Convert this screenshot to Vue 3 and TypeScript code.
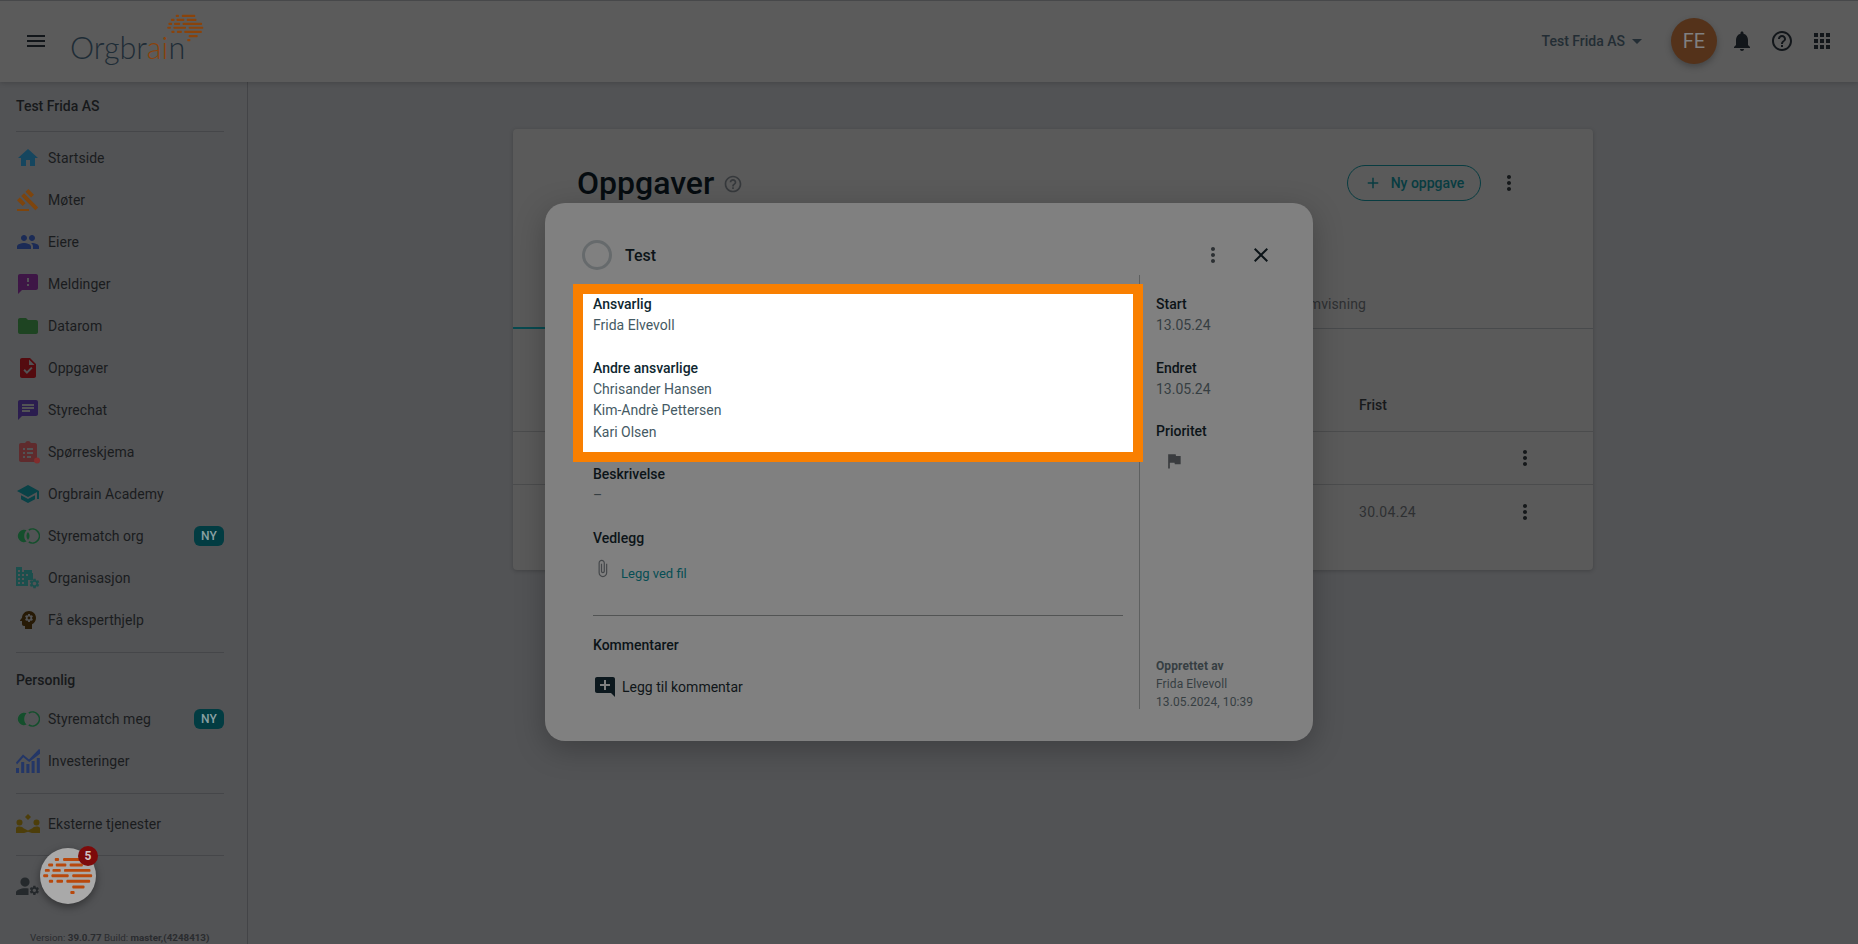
<template>
  <div class="page">
    <header class="topbar">
      <button class="icon-btn menu-btn" type="button">
        <svg viewBox="0 0 24 24" width="24" height="24"><path :d="icons.menu" /></svg>
      </button>
      <div class="logo">
        <span class="logo-text">Orgbr<span class="logo-accent">ai</span>n</span>
        <svg class="logo-brain" viewBox="130 650 150 115">
          <rect v-for="(r, i) in brainRects" :key="i" :x="r[0]" :y="r[1]" :width="r[2]" height="9" rx="3" />
        </svg>
      </div>
      <div class="topbar-right">
        <span class="org-name">Test Frida AS</span>
        <span class="caret"></span>
        <span class="avatar">FE</span>
        <svg class="top-icon" viewBox="0 0 24 24" width="24" height="24"><path :d="icons.bell" /></svg>
        <svg class="top-icon" viewBox="0 0 24 24" width="24" height="24"><path :d="icons.help" /></svg>
        <svg class="top-icon" viewBox="0 0 24 24" width="24" height="24"><path :d="icons.apps" /></svg>
      </div>
    </header>

    <div class="content">
      <aside class="sidebar">
        <div class="side-title">Test Frida AS</div>
        <div class="side-line first-line"></div>
        <nav>
          <div v-for="item in mainNav" :key="item.label" class="nav-item">
            <svg viewBox="0 0 24 24" width="24" height="24">
              <path
                v-for="(s, i) in item.shapes"
                :key="i"
                :d="s.d"
                :fill="s.fill"
                :transform="s.tf"
                :stroke="s.stroke"
              />
            </svg>
            <span class="nav-label">{{ item.label }}</span>
            <span v-if="item.isNew" class="ny">NY</span>
          </div>
        </nav>
        <div class="side-line after-main"></div>
        <div class="side-title personal">Personlig</div>
        <nav class="personal-nav">
          <div v-for="item in personalNav" :key="item.label" class="nav-item">
            <svg viewBox="0 0 24 24" width="24" height="24">
              <path v-for="(s, i) in item.shapes" :key="i" :d="s.d" :fill="s.fill" :stroke="s.stroke" />
            </svg>
            <span class="nav-label">{{ item.label }}</span>
            <span v-if="item.isNew" class="ny">NY</span>
          </div>
        </nav>
        <div class="side-line after-main"></div>
        <div class="nav-item external">
          <svg viewBox="0 0 24 24" width="24" height="24">
            <path v-for="(s, i) in externalShapes" :key="i" :d="s.d" :fill="s.fill" transform="translate(0 2)" />
          </svg>
          <span class="nav-label">Eksterne tjenester</span>
        </div>
        <div class="side-line after-external"></div>
        <svg class="user-settings" viewBox="0 0 24 24" width="24" height="24">
          <path v-for="(s, i) in userShapes" :key="i" :d="s.d" :fill="s.fill" :transform="s.tf" />
        </svg>
        <div class="version">Version: <b>39.0.77</b> Build: <b>master,(4248413)</b></div>
      </aside>

      <main class="main">
        <section class="card">
          <div class="card-head">
            <h1 class="card-title">Oppgaver</h1>
            <svg class="title-help" viewBox="0 0 24 24" width="20" height="20"><path :d="icons.help" /></svg>
            <button class="new-btn" type="button">
              <svg viewBox="0 0 24 24" width="18" height="18"><path :d="icons.add" /></svg>
              Ny oppgave
            </button>
            <svg class="card-more" viewBox="0 0 24 24" width="24" height="24"><path :d="icons.more" /></svg>
          </div>
          <div class="tabs">
            <div class="tab-active"></div>
            <span class="tab">Teamvisning</span>
          </div>
          <div class="table-head"><span class="col-date">Frist</span></div>
          <div class="table-row">
            <span class="col-date"></span>
            <svg viewBox="0 0 24 24" width="24" height="24"><path :d="icons.more" /></svg>
          </div>
          <div class="table-row">
            <span class="col-date">30.04.24</span>
            <svg viewBox="0 0 24 24" width="24" height="24"><path :d="icons.more" /></svg>
          </div>
        </section>
      </main>
    </div>

    <div class="fab">
      <svg viewBox="130 650 150 115" width="50" height="38">
        <rect v-for="(r, i) in brainRects" :key="i" :x="r[0]" :y="r[1]" :width="r[2]" height="9" rx="3" />
      </svg>
      <span class="fab-badge">5</span>
    </div>

    <div class="overlay">
      <div class="dialog">
        <div class="dialog-head">
          <span class="task-ring"></span>
          <span class="task-name">Test</span>
          <svg class="dialog-more" viewBox="0 0 24 24" width="24" height="24"><path :d="icons.more" /></svg>
          <svg class="dialog-close" viewBox="0 0 24 24" width="24" height="24"><path :d="icons.close" /></svg>
        </div>
        <div class="dialog-body">
          <div class="col-left">
            <div class="spotlight">
              <div class="label">Ansvarlig</div>
              <div class="value">Frida Elvevoll</div>
              <div class="label second">Andre ansvarlige</div>
              <div class="value">Chrisander Hansen</div>
              <div class="value">Kim-Andrè Pettersen</div>
              <div class="value last">Kari Olsen</div>
            </div>
            <div class="label desc-label">Beskrivelse</div>
            <div class="value">–</div>
            <div class="label second">Vedlegg</div>
            <div class="attach">
              <svg viewBox="0 0 24 24" width="19" height="19"><path :d="icons.clip" /></svg>
              <a class="attach-link">Legg ved fil</a>
            </div>
            <div class="divider"></div>
            <div class="label">Kommentarer</div>
            <div class="add-comment">
              <svg viewBox="0 0 24 24" width="24" height="24"><path :d="icons.comment" /></svg>
              <span>Legg til kommentar</span>
            </div>
          </div>
          <div class="col-right">
            <div class="label">Start</div>
            <div class="value">13.05.24</div>
            <div class="label second">Endret</div>
            <div class="value">13.05.24</div>
            <div class="label second priority">Prioritet</div>
            <svg class="flag" viewBox="0 0 24 24" width="20" height="20"><path :d="icons.flag" /></svg>
            <div class="meta">
              <div class="meta-title">Opprettet av</div>
              <div>Frida Elvevoll</div>
              <div>13.05.2024, 10:39</div>
            </div>
          </div>
        </div>
      </div>
    </div>
  </div>
</template>

<script setup lang="ts">
interface Shape {
  d: string;
  fill: string;
  tf?: string;
  stroke?: string;
}

interface NavItem {
  label: string;
  shapes: Shape[];
  isNew?: boolean;
}

const navBg = '#525355';

const gear =
  'M19.14 12.94c.04-.3.06-.61.06-.94 0-.32-.02-.64-.07-.94l2.03-1.58c.18-.14.23-.41.12-.61l-1.92-3.32c-.12-.22-.37-.29-.59-.22l-2.39.96c-.5-.38-1.03-.7-1.62-.94l-.36-2.54c-.04-.24-.24-.41-.48-.41h-3.84c-.24 0-.43.17-.47.41l-.36 2.54c-.59.24-1.13.57-1.62.94l-2.39-.96c-.22-.08-.47 0-.59.22L2.74 8.87c-.12.21-.08.47.12.61l2.03 1.58c-.05.3-.09.63-.09.94s.02.64.07.94l-2.03 1.58c-.18.14-.23.41-.12.61l1.92 3.32c.12.22.37.29.59.22l2.39-.96c.5.38 1.03.7 1.62.94l.36 2.54c.05.24.24.41.48.41h3.84c.24 0 .44-.17.47-.41l.36-2.54c.59-.24 1.13-.56 1.62-.94l2.39.96c.22.08.47 0 .59-.22l1.92-3.32c.12-.22.07-.47-.12-.61l-2.01-1.58zM12 15.6c-1.98 0-3.6-1.62-3.6-3.6s1.62-3.6 3.6-3.6 3.6 1.62 3.6 3.6-1.62 3.6-3.6 3.6z';

const icons = {
  menu: 'M3 18h18v-2H3v2zm0-5h18v-2H3v2zm0-7v2h18V6H3z',
  bell: 'M12 22c1.1 0 2-.9 2-2h-4c0 1.1.9 2 2 2zm6-6v-5c0-3.07-1.63-5.64-4.5-6.32V4c0-.83-.67-1.5-1.5-1.5s-1.5.67-1.5 1.5v.68C7.64 5.36 6 7.92 6 11v5l-2 2v1h16v-1l-2-2z',
  help: 'M11 18h2v-2h-2v2zm1-16C6.48 2 2 6.48 2 12s4.48 10 10 10 10-4.48 10-10S17.52 2 12 2zm0 18c-4.41 0-8-3.59-8-8s3.59-8 8-8 8 3.59 8 8-3.59 8-8 8zm0-14c-2.21 0-4 1.79-4 4h2c0-1.1.9-2 2-2s2 .9 2 2c0 2-3 1.75-3 5h2c0-2.25 3-2.5 3-5 0-2.21-1.79-4-4-4z',
  apps: 'M4 8h4V4H4v4zm6 12h4v-4h-4v4zm-6 0h4v-4H4v4zm0-6h4v-4H4v4zm6 0h4v-4h-4v4zm6-10v4h4V4h-4zm-6 4h4V4h-4v4zm6 6h4v-4h-4v4zm0 6h4v-4h-4v4z',
  more: 'M12 8c1.1 0 2-.9 2-2s-.9-2-2-2-2 .9-2 2 .9 2 2 2zm0 2c-1.1 0-2 .9-2 2s.9 2 2 2 2-.9 2-2-.9-2-2-2zm0 6c-1.1 0-2 .9-2 2s.9 2 2 2 2-.9 2-2-.9-2-2-2z',
  close: 'M19 6.41L17.59 5 12 10.59 6.41 5 5 6.41 10.59 12 5 17.59 6.41 19 12 13.41 17.59 19 19 17.59 13.41 12z',
  add: 'M19 13h-6v6h-2v-6H5v-2h6V5h2v6h6v2z',
  flag: 'M14.4 6L14 4H5v17h2v-7h5.6l.4 2h7V6z',
  clip: 'M16.5 6v11.5c0 2.21-1.79 4-4 4s-4-1.79-4-4V5c0-1.38 1.12-2.5 2.5-2.5s2.5 1.12 2.5 2.5v10.5c0 .55-.45 1-1 1s-1-.45-1-1V6H10v9.5c0 1.38 1.12 2.5 2.5 2.5s2.5-1.12 2.5-2.5V5c0-2.21-1.79-4-4-4S7 2.79 7 5v12.5c0 3.04 2.46 5.5 5.5 5.5s5.5-2.46 5.5-5.5V6h-1.5z',
  comment: 'M22 4c0-1.1-.9-2-2-2H4c-1.1 0-2 .9-2 2v12c0 1.1.9 2 2 2h14l4 4V4zm-5 7h-4v4h-2v-4H7V9h4V5h2v4h4v2z',
};

// x, y, width of each dash in the brain mark
const brainRects: number[][] = [
  [165, 653, 13], [190, 653, 55],
  [145, 670, 15], [168, 670, 32], [210, 670, 40],
  [135, 686, 15], [158, 686, 25], [193, 686, 80],
  [130, 702, 15], [155, 702, 52], [218, 702, 60],
  [147, 719, 13], [170, 719, 20], [200, 719, 72],
  [218, 736, 37],
  [212, 753, 13],
];

const matchShapes = (left: string, lens: string, right: string): Shape[] => [
  { d: 'M12 6.26A7 7 0 1 0 12 17.74 7 7 0 0 1 12 6.26z', fill: left, stroke: navBg },
  { d: 'M12 8A6 6 0 0 1 12 16 6 6 0 0 1 12 8z', fill: lens },
  { d: 'M12.8 6A7 7 0 1 1 12.8 18', fill: 'none', stroke: right },
];

const mainNav: NavItem[] = [
  { label: 'Startside', shapes: [{ d: 'M10 20v-6h4v6h5v-8h3L12 3 2 12h3v8z', fill: '#15465f' }] },
  {
    label: 'Møter',
    shapes: [{
      d: 'M1 21h12v2H1v-2zM5.245 8.07l2.83-2.827 14.14 14.142-2.828 2.828L5.245 8.07zM12.317 1l5.657 5.656-2.83 2.83-5.654-5.66L12.317 1zM3.825 9.485l5.657 5.657-2.828 2.828-5.657-5.657 2.828-2.828z',
      fill: '#7e450d',
    }],
  },
  {
    label: 'Eiere',
    shapes: [{
      d: 'M16 11c1.66 0 2.99-1.34 2.99-3S17.66 5 16 5c-1.66 0-3 1.34-3 3s1.34 3 3 3zm-8 0c1.66 0 2.99-1.34 2.99-3S9.66 5 8 5C6.34 5 5 6.34 5 8s1.34 3 3 3zm0 2c-2.33 0-7 1.17-7 3.5V19h14v-2.5c0-2.33-4.67-3.5-7-3.5zm8 0c-.29 0-.62.02-.97.05 1.16.84 1.97 1.97 1.97 3.45V19h6v-2.5c0-2.33-4.67-3.5-7-3.5z',
      fill: '#1b2b56',
    }],
  },
  {
    label: 'Meldinger',
    shapes: [{
      d: 'M20 2H4c-1.1 0-1.99.9-1.99 2L2 22l4-4h14c1.1 0 2-.9 2-2V4c0-1.1-.9-2-2-2zm-7 12h-2v-2h2v2zm0-4h-2V6h2v4z',
      fill: '#3e1646',
    }],
  },
  {
    label: 'Datarom',
    shapes: [{
      d: 'M10 4H4c-1.1 0-1.99.9-1.99 2L2 18c0 1.1.9 2 2 2h16c1.1 0 2-.9 2-2V8c0-1.1-.9-2-2-2h-8l-2-2z',
      fill: '#1e4422',
    }],
  },
  {
    label: 'Oppgaver',
    shapes: [{
      d: 'M14 2H6c-1.1 0-1.99.9-1.99 2L4 20c0 1.1.89 2 1.99 2H18c1.1 0 2-.9 2-2V8l-6-6zm-3.06 16L7.4 14.46l1.41-1.41 2.12 2.12 4.24-4.24 1.41 1.41L10.94 18zM13 9V3.5L18.5 9H13z',
      fill: '#540b0f',
    }],
  },
  {
    label: 'Styrechat',
    shapes: [{
      d: 'M20 2H4c-1.1 0-1.99.9-1.99 2L2 22l4-4h14c1.1 0 2-.9 2-2V4c0-1.1-.9-2-2-2zM6 9h12v2H6V9zm8 5H6v-2h8v2zm4-6H6V6h12v2z',
      fill: '#2b1d4f',
    }],
  },
  {
    label: 'Spørreskjema',
    shapes: [
      {
        d: 'M19 3h-4.18C14.4 1.84 13.3 1 12 1c-1.3 0-2.4.84-2.82 2H5c-1.1 0-2 .9-2 2v15c0 1.1.9 2 2 2h14c1.1 0 2-.9 2-2V5c0-1.1-.9-2-2-2z',
        fill: '#5f2b2d',
      },
      { d: 'M7 8h2v2H7zM11 8h6v2h-6zM7 12h2v2H7zM11 12h6v2h-6zM7 16h2v2H7zM11 16h4v2h-4z', fill: navBg },
      { d: 'M21 17.5a3 3 0 1 0 0 6 3 3 0 0 0 0-6z', fill: '#812d2d' },
    ],
  },
  {
    label: 'Orgbrain Academy',
    shapes: [{
      d: 'M5 13.18v4L12 21l7-3.82v-4L12 17l-7-3.82zM12 3L1 9l11 6 9-4.91V17h2V9L12 3z',
      fill: '#094247',
    }],
  },
  { label: 'Styrematch org', isNew: true, shapes: matchShapes('#144f2c', '#144f2c', '#144f2c') },
  {
    label: 'Organisasjon',
    shapes: [
      { d: 'M0 1h6v3h10v3h1v7h-5v6H0z', fill: '#1b4f4d' },
      { d: 'M2 4h2v2H2zM6 4h2v2H6zM2 8h2v2H2zM6 8h2v2H6zM10 8h2v2h-2zM2 12h2v2H2zM6 12h2v2H6zM2 16h2v2H2zM6 16h2v2H6z', fill: navBg },
      { d: gear, fill: '#1b4f4d', tf: 'translate(12.5 11.5) scale(.5)' },
    ],
  },
  {
    label: 'Få eksperthjelp',
    shapes: [{
      d: 'M13 8.57c-.79 0-1.43.64-1.43 1.43s.64 1.43 1.43 1.43 1.43-.64 1.43-1.43-.64-1.43-1.43-1.43zM13 3C9.25 3 6.2 5.94 6.02 9.64L4.1 12.2c-.25.33 0 .8.4.8H6v3c0 1.1.9 2 2 2h1v3h7v-4.68c2.36-1.12 4-3.53 4-6.32 0-3.87-3.13-7-7-7zm3 7c0 .13-.01.26-.02.39l.83.66c.08.06.1.16.05.25l-.8 1.39c-.05.09-.16.12-.24.09l-.99-.4c-.21.16-.43.29-.67.39L14 13.83c-.01.1-.1.17-.2.17h-1.6c-.1 0-.18-.07-.2-.17l-.15-1.06c-.25-.1-.47-.23-.68-.39l-.99.4c-.09.03-.2 0-.25-.09l-.8-1.39c-.05-.08-.03-.19.05-.25l.84-.66c-.01-.13-.02-.26-.02-.39s.02-.27.04-.39l-.85-.66c-.08-.06-.1-.16-.05-.26l.8-1.38c.05-.09.15-.12.24-.09l1 .4c.2-.15.43-.29.67-.39L12 6.17c.02-.1.1-.17.2-.17h1.6c.1 0 .18.07.2.17l.15 1.06c.24.1.46.23.67.39l1-.4c.09-.03.2 0 .24.09l.8 1.38c.05.09.03.2-.05.26l-.85.66c.03.12.04.25.04.39z',
      fill: '#271a06',
    }],
  },
];

const personalNav: NavItem[] = [
  { label: 'Styrematch meg', isNew: true, shapes: matchShapes('#144f2c', navBg, '#144f2c') },
  {
    label: 'Investeringer',
    shapes: [
      { d: 'M0 24v-5h3v5zM5.2 24V13h3v11zM10.4 24v-9h3v9zM15.6 24v-12h3v12zM20.8 24V9h3v15z', fill: '#233667' },
      { d: 'M0 13.5L7 5.5l6 5L23 0l1 .8v4L13.2 13 7.3 8.3 1 15.4z', fill: '#233667' },
    ],
  },
];

const externalShapes: Shape[] = [
  { d: 'M12 0l3 3-3 3-3-3z', fill: '#4d3e0a' },
  { d: 'M3.5 5.5a3 3 0 1 1 0 6 3 3 0 0 1 0-6zM20.5 5.5a3 3 0 1 1 0 6 3 3 0 0 1 0-6z', fill: '#4d3e0a' },
  { d: 'M0 19v-4.5c0-1.5 1.5-2 3.5-2s3.2.8 4 1.8l4.5 2.2 4.5-2.2c.8-1 2-1.8 4-1.8s3.5.5 3.5 2V19h-8l-4-1.2L8 19z', fill: '#4d3e0a' },
];

const userShapes: Shape[] = [
  { d: 'M9 2.5a4.6 4.6 0 1 1 0 9.2 4.6 4.6 0 0 1 0-9.2zM0 20v-2.5c0-2.6 5.2-4.3 9-4.3 1.2 0 2.4.2 3.5.4v6.4z', fill: '#25292c' },
  { d: gear, fill: '#25292c', tf: 'translate(12.6 9.6) scale(.48)' },
];
</script>

<style scoped>
.page {
  position: relative;
  display: flex;
  flex-direction: column;
  height: 944px;
  overflow: hidden;
  background: #525355;
  font-family: Roboto, "Liberation Sans", sans-serif;
  font-size: 14px;
  color: #1a1c1e;
}

.topbar {
  position: relative;
  z-index: 1;
  display: flex;
  align-items: center;
  flex: 0 0 82px;
  box-sizing: border-box;
  padding: 0 24px;
  background: #5b5b5b;
  box-shadow: inset 0 1px 0 #47484a, 0 1px 5px rgba(0, 0, 0, 0.18);
}

.icon-btn {
  padding: 0;
  border: none;
  background: none;
}

.menu-btn {
  display: flex;
  fill: #12161a;
}

.logo {
  position: relative;
  width: 135px;
  height: 50px;
  margin-left: 22px;
}

.logo-text {
  position: absolute;
  left: 0;
  top: 13px;
  font-family: Lato, sans-serif;
  font-weight: 300;
  font-size: 30.5px;
  line-height: 36px;
  color: #1e2c36;
}

.logo-accent {
  color: #8a430b;
}

.logo-brain {
  position: absolute;
  left: 97px;
  top: -2px;
  width: 37px;
  height: 28px;
  fill: #8a430b;
}

.topbar-right {
  display: flex;
  align-items: center;
  margin-left: auto;
}

.org-name {
  font-weight: 500;
  color: #232d34;
}

.caret {
  width: 0;
  height: 0;
  margin-left: 7px;
  border-left: 5px solid transparent;
  border-right: 5px solid transparent;
  border-top: 5px solid #232d34;
}

.avatar {
  display: flex;
  align-items: center;
  justify-content: center;
  width: 46px;
  height: 46px;
  margin-left: 29px;
  margin-right: 13px;
  border-radius: 50%;
  background: #54321a;
  color: #808080;
  font-size: 20px;
  box-shadow: 0 3px 6px rgba(0, 0, 0, 0.25);
}

.top-icon {
  margin-left: 16px;
  fill: #12161a;
}

.avatar + .top-icon {
  margin-left: 0;
}

.content {
  display: flex;
  flex: 1;
  min-height: 0;
}

.sidebar {
  flex: 0 0 248px;
  box-sizing: border-box;
  padding: 14px 23px 0 16px;
  border-right: 1px solid #434447;
  background: #525355;
}

.side-title {
  font-weight: 500;
  line-height: 20px;
  color: #17191b;
}

.side-line {
  height: 1px;
  background: #454649;
}

.first-line {
  margin: 15px 0 5px;
}

.after-main {
  margin: 11px 0 9px;
}

.personal {
  margin-top: 17px;
}

.personal-nav {
  margin-top: 8px;
}

.nav-item {
  display: flex;
  align-items: center;
  gap: 8px;
  height: 42px;
  letter-spacing: 0.05px;
  color: #1a1c1e;
}

.nav-item svg {
  flex: none;
  stroke-width: 1.6;
}

.nav-label {
  flex: 1;
}

.ny {
  display: flex;
  align-items: center;
  justify-content: center;
  width: 30px;
  height: 20px;
  border-radius: 6px;
  background: #023c42;
  color: #8aa0a2;
  font-size: 12px;
  font-weight: 500;
}

.after-external {
  margin-top: 10px;
}

.user-settings {
  display: block;
  margin-top: 19px;
}

.version {
  margin: 32px 0 0 14px;
  white-space: nowrap;
  font-size: 9.8px;
  line-height: 14px;
  color: #2a2c2f;
}

.main {
  flex: 1;
  display: flex;
  justify-content: center;
  align-items: flex-start;
  padding-top: 47px;
}

.card {
  width: 1080px;
  height: 441px;
  box-sizing: border-box;
  border-radius: 4px;
  background: #5a5a5a;
  box-shadow: 0 1px 4px rgba(0, 0, 0, 0.2);
}

.card-head {
  display: flex;
  align-items: center;
  height: 36px;
  padding: 36px 72px 0 64px;
}

.card-title {
  margin: 0;
  font-size: 32px;
  font-weight: 500;
  color: #060c10;
}

.title-help {
  margin-left: 9px;
  margin-top: 1px;
  fill: #36393c;
}

.new-btn {
  display: flex;
  align-items: center;
  justify-content: center;
  gap: 9px;
  width: 134px;
  height: 36px;
  margin-left: auto;
  padding: 0;
  border: 1px solid #083c41;
  border-radius: 18px;
  background: none;
  color: #083c41;
  font-family: inherit;
  font-size: 14px;
  font-weight: 500;
  fill: #083c41;
}

.card-more {
  margin-left: 16px;
  fill: #15181a;
}

.tabs {
  display: flex;
  align-items: flex-end;
  justify-content: space-between;
  box-sizing: border-box;
  height: 128px;
  padding-right: 227px;
  border-bottom: 1px solid #484a4c;
}

.tab-active {
  width: 160px;
  height: 2px;
  margin-bottom: -1px;
  background: #084a50;
}

.tab {
  margin-bottom: 16px;
  letter-spacing: 0.1px;
  color: #2e3032;
}

.table-head {
  display: flex;
  align-items: flex-end;
  height: 103px;
  box-sizing: border-box;
  padding: 0 0 18px 846px;
  border-bottom: 1px solid #4b4c4d;
  font-weight: 500;
  color: #17191b;
}

.table-row {
  display: flex;
  align-items: center;
  height: 53px;
  box-sizing: border-box;
  padding: 0 56px 0 846px;
  border-bottom: 1px solid #4b4c4d;
  fill: #15181a;
  letter-spacing: 0.3px;
  color: #2e3032;
}

.table-row:last-child {
  border-bottom: none;
}

.col-date {
  width: 154px;
}

.fab {
  position: absolute;
  left: 40px;
  top: 848px;
  z-index: 2;
  display: flex;
  align-items: center;
  justify-content: center;
  width: 56px;
  height: 56px;
  border-radius: 50%;
  background: #a9a9a9;
  box-shadow: 0 3px 8px rgba(0, 0, 0, 0.4);
  fill: #b8480c;
}

.fab-badge {
  position: absolute;
  right: -2px;
  top: -2px;
  display: flex;
  align-items: center;
  justify-content: center;
  width: 20px;
  height: 20px;
  border-radius: 50%;
  background: #7d0a0a;
  color: #d0c4c4;
  font-size: 12px;
  font-weight: 700;
}

.overlay {
  position: absolute;
  inset: 0;
  z-index: 3;
  display: flex;
  align-items: center;
  justify-content: center;
}

.dialog {
  display: flex;
  flex-direction: column;
  width: 768px;
  height: 538px;
  box-sizing: border-box;
  padding: 0 0 32px 48px;
  border-radius: 20px;
  background: #808080;
  box-shadow: 0 8px 30px rgba(0, 0, 0, 0.25);
}

.dialog-head {
  display: flex;
  align-items: center;
  flex: 0 0 72px;
  box-sizing: border-box;
  padding: 32px 40px 0 0;
}

.task-ring {
  width: 30px;
  height: 30px;
  box-sizing: border-box;
  margin-left: -11px;
  border: 3px solid #666a6c;
  border-radius: 50%;
}

.task-name {
  margin-left: 13px;
  font-size: 16px;
  font-weight: 500;
  color: #0c1418;
}

.dialog-more {
  margin-left: auto;
  fill: #2c3033;
}

.dialog-close {
  margin-left: 24px;
  fill: #0c1418;
}

.dialog-body {
  display: flex;
  flex: 1;
  min-height: 0;
}

.col-left {
  flex: 0 0 530px;
  padding-top: 19px;
}

.col-right {
  display: flex;
  flex-direction: column;
  flex: 1;
  margin-left: 16px;
  padding: 19px 0 0 16px;
  border-left: 1px solid #5e6060;
}

.label {
  font-weight: 500;
  line-height: 21px;
  color: #0c1418;
}

.value {
  line-height: 21px;
  color: #363e42;
}

.second {
  margin-top: 22px;
}

.priority {
  margin-top: 21px;
}

.spotlight {
  position: relative;
  z-index: 1;
  margin: 0 -10px;
  padding: 0 10px 9px;
  background: #fff;
  box-shadow: 0 0 0 10px #f97f00;
}

.spotlight .label {
  color: #0f2730;
}

.spotlight .value {
  color: #455a64;
}

.spotlight .last {
  margin-top: 1px;
}

.desc-label {
  margin-top: 12px;
}

.attach {
  display: flex;
  align-items: flex-start;
  height: 44px;
  margin-top: 10px;
  fill: #44474a;
}

.attach svg {
  flex: none;
}

.attach-link {
  margin-left: 9px;
  margin-top: 7px;
  font-size: 13px;
  color: #074e54;
}

.divider {
  height: 1px;
  margin: 12px 0 19px;
  background: #525454;
}

.add-comment {
  display: flex;
  align-items: center;
  gap: 5px;
  margin-top: 19px;
  fill: #0c181e;
  color: #0f1518;
}

.flag {
  margin: 9px 0 0 8px;
  fill: #3a3c3f;
}

.meta {
  margin-top: auto;
  margin-bottom: -2px;
  font-size: 12px;
  line-height: 18px;
  letter-spacing: 0.1px;
  color: #363e42;
}

.meta-title {
  font-weight: 700;
}
</style>
